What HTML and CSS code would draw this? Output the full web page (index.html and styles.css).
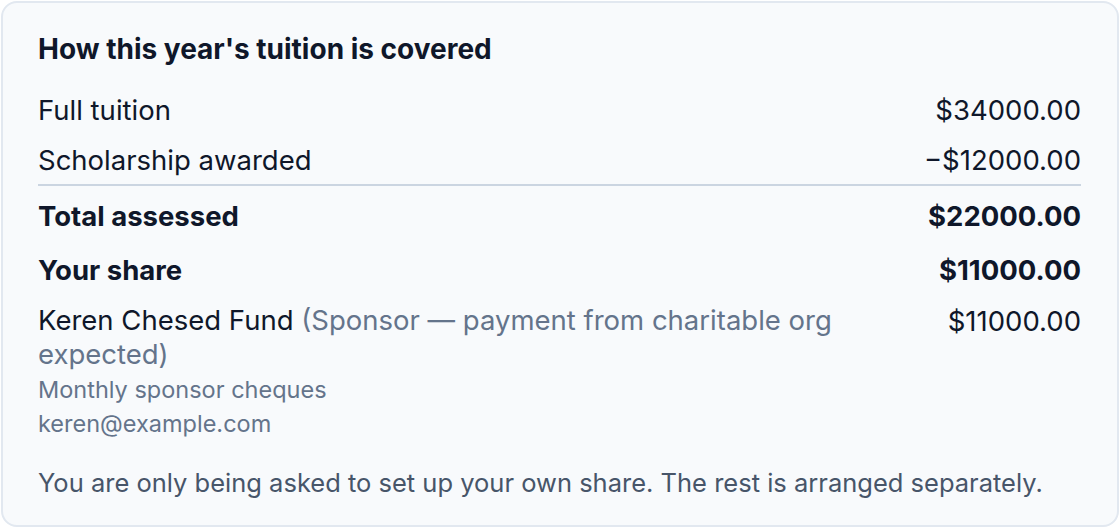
FILE: index.html
```html
<!DOCTYPE html>
<html lang="en">
<head>
<meta charset="utf-8">
<title>Tuition coverage</title>
<link rel="stylesheet" href="styles.css">
</head>
<body>
<section class="card">
  <h2 class="title">How this year's tuition is covered</h2>
  <div class="rows">
    <div class="row"><span class="label">Full tuition</span><span class="amt">$34000.00</span></div>
    <div class="row row-divided"><span class="label">Scholarship awarded</span><span class="amt">&minus;$12000.00</span></div>
    <div class="row row-strong row-after-divider"><span class="label">Total assessed</span><span class="amt">$22000.00</span></div>
    <div class="row row-strong row-share"><span class="label">Your share</span><span class="amt">$11000.00</span></div>
    <div class="row row-sponsor">
      <div class="label sponsor">
        <div class="sponsor-name">Keren Chesed Fund <span class="muted">(Sponsor — payment from charitable org expected)</span></div>
        <div class="sponsor-details">
          <div class="sponsor-meta">Monthly sponsor cheques</div>
          <div class="sponsor-meta">keren@example.com</div>
        </div>
      </div>
      <span class="amt">$11000.00</span>
    </div>
  </div>
  <p class="note">You are only being asked to set up your own share. The rest is arranged separately.</p>
</section>
</body>
</html>
```
FILE: styles.css
```css
* { box-sizing: border-box; }
html, body { margin: 0; padding: 0; background: #ffffff; }
body { font-family: Inter, "Noto Sans", "Liberation Sans", sans-serif; color: #0f172a; }

.card {
  margin: 1px;
  height: 526px;
  background: #f8fafc;
  border: 2px solid #e2e8f0;
  border-radius: 16px;
  padding: 28px 36px 0 35px;
}

.title {
  margin: 0;
  font-size: 28px;
  line-height: 36px;
  font-weight: 700;
}

.rows { margin-top: 18px; }

.row {
  display: flex;
  justify-content: space-between;
  align-items: flex-start;
  gap: 28px;
  font-size: 27.5px;
  line-height: 34px;
  padding: 8px 0;
}

.row-divided { border-bottom: 2px solid #cbd5e1; padding-bottom: 7px; }
.row-after-divider { padding-top: 13px; }
.row-strong { font-weight: 700; padding-bottom: 12px; }
.row-share { padding-top: 8px; padding-bottom: 9px; }

.label { flex: 1; min-width: 0; }
.amt { white-space: nowrap; text-align: right; }

.sponsor-name { line-height: 33.5px; }
.muted { color: #64748b; }
.sponsor-details { margin-top: 2px; }
.sponsor-meta {
  font-size: 23.5px;
  line-height: 34px;
  color: #64748b;
}

.note {
  margin: 17px 0 0 0;
  font-size: 25.5px;
  line-height: 34px;
  color: #475569;
}
```
